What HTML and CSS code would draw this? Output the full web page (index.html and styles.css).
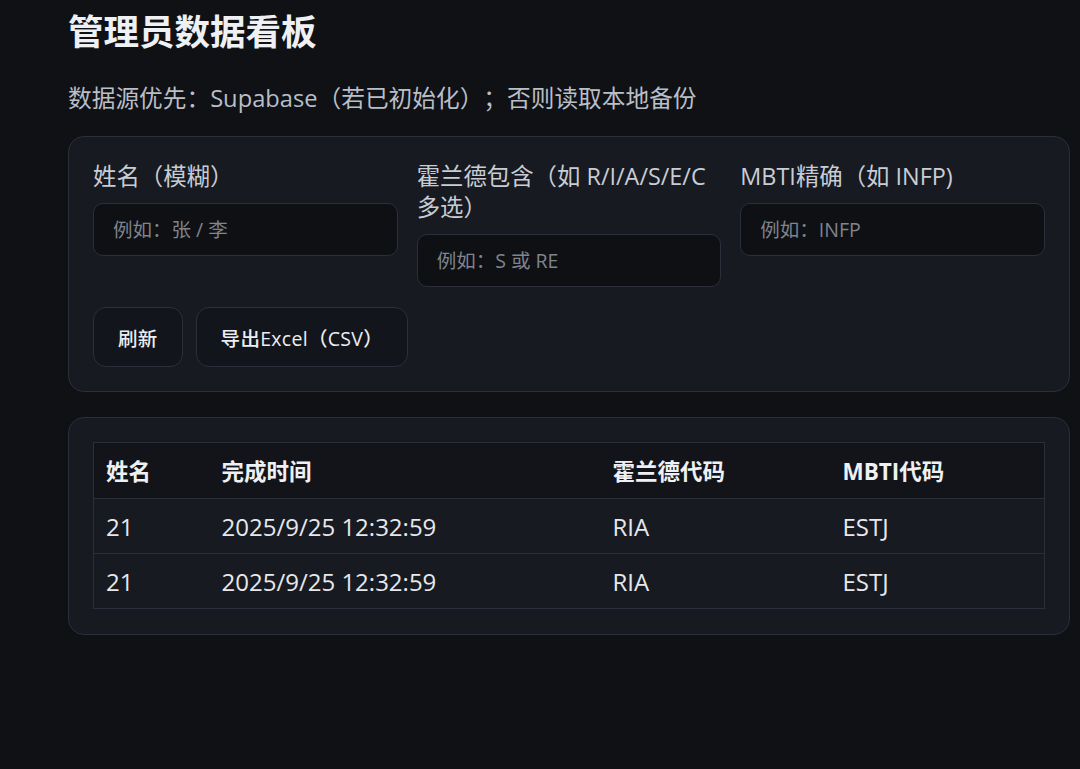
FILE: index.html
```html
<!DOCTYPE html>
<html lang="zh-CN">
<head>
<meta charset="utf-8">
<title>管理员数据看板</title>
<link rel="stylesheet" href="styles.css">
</head>
<body>
<main class="page">
  <h1 class="title">管理员数据看板</h1>
  <p class="subtitle">数据源优先：Supabase（若已初始化）；否则读取本地备份</p>

  <section class="card filters">
    <div class="fields">
      <label class="field">
        <span class="field-label">姓名（模糊）</span>
        <input class="input" type="text" placeholder="例如：张 / 李">
      </label>
      <label class="field">
        <span class="field-label">霍兰德包含（如 R/I/A/S/E/C 多选）</span>
        <input class="input" type="text" placeholder="例如：S 或 RE">
      </label>
      <label class="field">
        <span class="field-label">MBTI精确（如 INFP)</span>
        <input class="input" type="text" placeholder="例如：INFP">
      </label>
    </div>
    <div class="actions">
      <button class="btn" type="button">刷新</button>
      <button class="btn" type="button">导出Excel（CSV）</button>
    </div>
  </section>

  <section class="card results">
    <table class="table">
      <colgroup>
        <col class="c-name">
        <col class="c-time">
        <col class="c-holland">
        <col>
      </colgroup>
      <thead>
        <tr><th>姓名</th><th>完成时间</th><th>霍兰德代码</th><th>MBTI代码</th></tr>
      </thead>
      <tbody>
        <tr><td>21</td><td>2025/9/25 12:32:59</td><td>RIA</td><td>ESTJ</td></tr>
        <tr><td>21</td><td>2025/9/25 12:32:59</td><td>RIA</td><td>ESTJ</td></tr>
      </tbody>
    </table>
  </section>
</main>
</body>
</html>
```

FILE: styles.css
```css
* { box-sizing: border-box; }

html, body {
  margin: 0;
  padding: 0;
  background: #0f1115;
}

body {
  font-family: "Open Sans", "Noto Sans CJK SC", sans-serif;
  color: #e6e8ec;
  text-spacing-trim: space-all;
}

.page {
  width: 1002px;
  margin-left: 68px;
  padding-top: 10px;
}

.title {
  margin: 0;
  font-size: 35.5px;
  line-height: 42px;
  font-weight: 700;
  color: #eef0f3;
}

.subtitle {
  margin: 30px 0 0;
  font-size: 23.7px;
  line-height: 32px;
  color: #b9bec7;
}

.card {
  background: #171a21;
  border: 1px solid #2a2f3b;
  border-radius: 16px;
  padding: 24px;
}

.filters {
  margin-top: 22px;
}

.fields {
  display: grid;
  grid-template-columns: repeat(3, 1fr);
  column-gap: 19px;
  align-items: start;
}

.field {
  display: flex;
  flex-direction: column;
}

.field-label {
  font-size: 23.4px;
  line-height: 31px;
  color: #c8cdd5;
  margin-bottom: 11px;
}

.input {
  height: 53px;
  width: 100%;
  background: #0e1014;
  border: 1px solid #2a2f3b;
  border-radius: 10px;
  padding: 0 19px;
  font-family: "Open Sans", "Noto Sans CJK SC", sans-serif;
  font-size: 19.5px;
  color: #e6e8ec;
  outline: none;
  text-spacing-trim: space-all;
}

.input::placeholder {
  color: #7f848d;
}

.actions {
  display: flex;
  gap: 13px;
  margin-top: 20px;
}

.btn {
  height: 60px;
  padding: 0 24px;
  background: #12151b;
  border: 1px solid #2a2f3b;
  border-radius: 13px;
  font-family: "Open Sans", "Noto Sans CJK SC", sans-serif;
  font-size: 19.5px;
  font-weight: 500;
  letter-spacing: 0.3px;
  color: #eceef1;
  text-spacing-trim: space-all;
}

.results {
  margin-top: 25px;
  padding-bottom: 25px;
}

.table {
  width: 100%;
  border-collapse: collapse;
  table-layout: fixed;
  border: 1px solid #2a2f3b;
  font-size: 22.5px;
}

.c-name { width: 116px; }
.c-time { width: 391px; }
.c-holland { width: 230px; }

.table th,
.table td {
  text-align: left;
  padding: 0 12px;
  border-bottom: 1px solid #2a2f3b;
  white-space: nowrap;
}

.table th {
  height: 56px;
  font-weight: 700;
  background: #12141a;
  color: #eef0f3;
}

.table td {
  height: 55px;
  font-size: 24px;
  color: #e6e8ec;
}
```
